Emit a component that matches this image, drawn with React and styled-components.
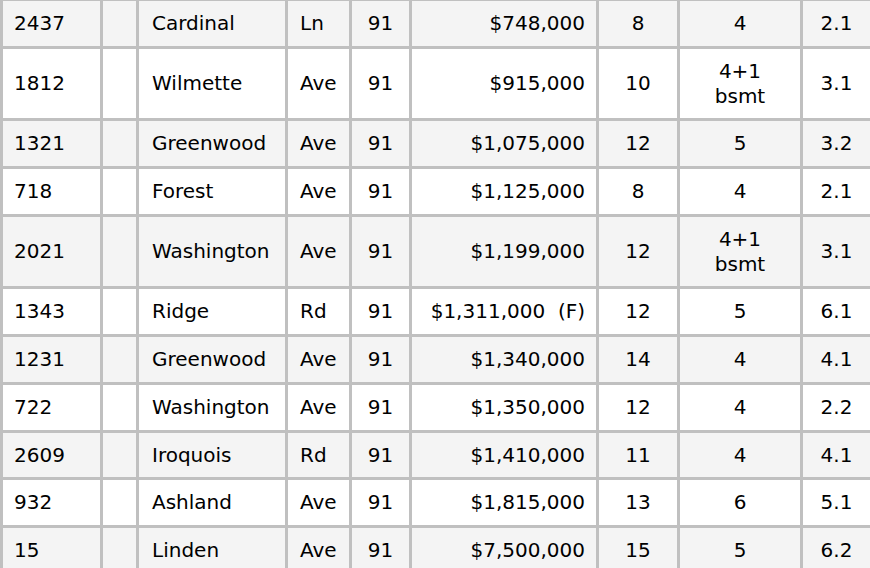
import React from 'react';
import styled, { createGlobalStyle } from 'styled-components';

const GlobalStyle = createGlobalStyle`
  html, body {
    margin: 0;
    padding: 0;
    background: #ffffff;
    overflow: hidden;
  }
`;

const Page = styled.div`
  width: 870px;
  height: 568px;
  overflow: hidden;
`;

const Table = styled.table`
  table-layout: fixed;
  width: 873px;
  margin-top: -2px;
  border-collapse: separate;
  border-spacing: 3px;
  background: #c0c0c0;
  font-family: "DejaVu Sans", Verdana, sans-serif;
  font-size: 20px;
  color: #000;
`;

const Col = styled.col`
  width: ${props => props.$w}px;
`;

const Row = styled.tr`
  background: ${props => (props.$shade ? '#f4f4f4' : '#ffffff')};
`;

const Cell = styled.td`
  padding: 10px 11px 10px ${props => props.$pl || 11}px;
  line-height: 24.75px;
  text-align: ${props => props.$align || 'left'};
  white-space: nowrap;
  vertical-align: middle;
`;

const widths = [97, 33, 146, 61, 57, 184, 78, 120, 67];

const rows = [
  ['2437', 'Cardinal', 'Ln', '$748,000', '8', '4', '2.1'],
  ['1812', 'Wilmette', 'Ave', '$915,000', '10', '4+1|bsmt', '3.1'],
  ['1321', 'Greenwood', 'Ave', '$1,075,000', '12', '5', '3.2'],
  ['718', 'Forest', 'Ave', '$1,125,000', '8', '4', '2.1'],
  ['2021', 'Washington', 'Ave', '$1,199,000', '12', '4+1|bsmt', '3.1'],
  ['1343', 'Ridge', 'Rd', '$1,311,000\u00a0\u00a0(F)', '12', '5', '6.1'],
  ['1231', 'Greenwood', 'Ave', '$1,340,000', '14', '4', '4.1'],
  ['722', 'Washington', 'Ave', '$1,350,000', '12', '4', '2.2'],
  ['2609', 'Iroquois', 'Rd', '$1,410,000', '11', '4', '4.1'],
  ['932', 'Ashland', 'Ave', '$1,815,000', '13', '6', '5.1'],
  ['15', 'Linden', 'Ave', '$7,500,000', '15', '5', '6.2'],
];

const Beds = ({ value }) => {
  const parts = value.split('|');
  return parts.map((p, i) => (
    <React.Fragment key={i}>
      {i > 0 && <br />}
      {p}
    </React.Fragment>
  ));
};

const App = () => (
  <Page>
    <GlobalStyle />
    <Table>
      <colgroup>
        {widths.map((w, i) => (
          <Col key={i} $w={w} />
        ))}
      </colgroup>
      <tbody>
        {rows.map(([num, street, suffix, price, rooms, beds, baths], i) => (
          <Row key={num + street} $shade={i % 2 === 0}>
            <Cell>{num}</Cell>
            <Cell />
            <Cell $pl={13}>{street}</Cell>
            <Cell $pl={12}>{suffix}</Cell>
            <Cell $align="center">91</Cell>
            <Cell $align="right">{price}</Cell>
            <Cell $align="center">{rooms}</Cell>
            <Cell $align="center"><Beds value={beds} /></Cell>
            <Cell $align="center">{baths}</Cell>
          </Row>
        ))}
      </tbody>
    </Table>
  </Page>
);

export default App;
